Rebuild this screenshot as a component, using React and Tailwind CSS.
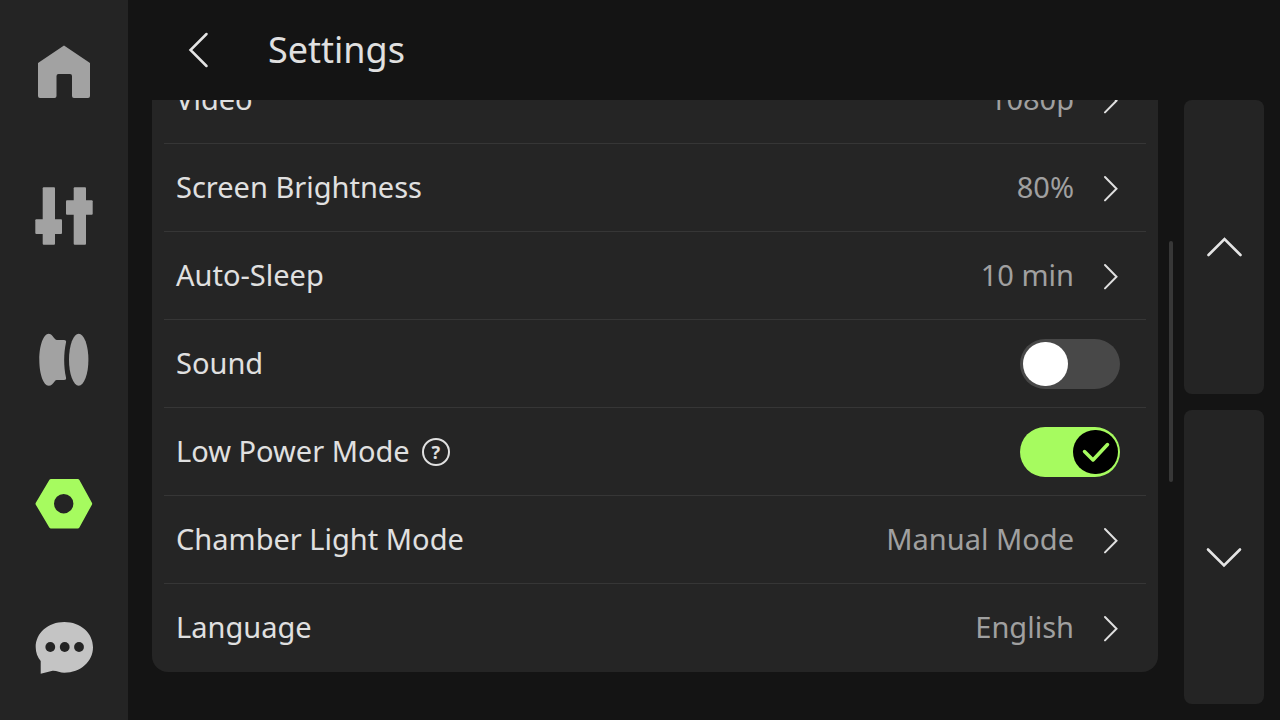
import { useState } from "react"
import clsx from "clsx"

const navItems = [
  { id: "home", label: "Home", Icon: HomeIcon },
  { id: "controls", label: "Controls", Icon: ControlsIcon },
  { id: "filament", label: "Filament", Icon: SpoolIcon },
  { id: "settings", label: "Settings", Icon: NutIcon },
  { id: "messages", label: "Messages", Icon: ChatIcon },
]

const settings = [
  { id: "video", label: "Video", value: "1080p" },
  { id: "brightness", label: "Screen Brightness", value: "80%" },
  { id: "sleep", label: "Auto-Sleep", value: "10 min" },
  { id: "sound", label: "Sound", toggle: true, on: false },
  { id: "power", label: "Low Power Mode", toggle: true, on: true, help: true },
  { id: "light", label: "Chamber Light Mode", value: "Manual Mode" },
  { id: "language", label: "Language", value: "English" },
]

function HomeIcon() {
  return (
    <svg viewBox="0 0 60 60" className="size-[60px]" fill="currentColor">
      <path d="M30 3.500 56 21v33a2 2 0 0 1-2 2H40a2 2 0 0 1-2-2V34a2 2 0 0 0-2-2H24.500a2 2 0 0 0-2 2v20a2 2 0 0 1-2 2H6a2 2 0 0 1-2-2V21Z" />
    </svg>
  )
}

function ControlsIcon() {
  return (
    <svg viewBox="0 0 60 60" className="size-[60px]" fill="currentColor">
      <rect x="8.700" y="1.300" width="12.300" height="57.400" rx="1" />
      <rect x="1.300" y="33.300" width="26.700" height="14.700" rx="1" />
      <rect x="39.700" y="1.300" width="12.300" height="57.400" rx="1" />
      <rect x="32" y="14.300" width="26.700" height="14.500" rx="1" />
    </svg>
  )
}

function SpoolIcon() {
  return (
    <svg viewBox="0 0 60 60" className="size-[60px]" fill="currentColor">
      <path d="M14.700 3.700C17.500 3.700 18.800 6.500 21 9c.8.900 1.400 1 2.500 1H30c1.800 0 2.400 1 2 2.500-2.400 11-2.400 23.500 0 35 .4 1.700-.3 2.500-2 2.500h-6.500c-1.300 0-1.900.2-2.700 1.200-2 2.500-3.400 4.500-6.100 4.500-5.200 0-9.400-11.600-9.400-26S9.500 3.700 14.700 3.700Z" />
      <ellipse cx="44.700" cy="29.700" rx="9.700" ry="26" />
    </svg>
  )
}

function NutIcon() {
  return (
    <svg viewBox="0 0 60 60" className="size-[60px]" fill="currentColor">
      <path
        fillRule="evenodd"
        d="M17 5h26.700a2 2 0 0 1 1.700 1l12.500 22.700a2 2 0 0 1 0 2L45.400 53.500a2 2 0 0 1-1.700 1H17a2 2 0 0 1-1.700-1L1.800 30.700a2 2 0 0 1 0-2L15.300 6a2 2 0 0 1 1.700-1Zm12.700 15a9.700 9.700 0 1 0 0 19.400 9.700 9.700 0 0 0 0-19.400Z"
      />
    </svg>
  )
}

function ChatIcon() {
  return (
    <svg viewBox="0 0 60 60" className="size-[60px]">
      <path
        fill="currentColor"
        d="M30.300 4C46.500 4 59 15 59 29.300s-12.500 25.400-28.700 25.400c-4.200 0-7.800-2.200-11.800-1.900L6.700 55.700V43C3.500 39.500 1.700 34.500 1.700 29.300 1.700 15 14.200 4 30.300 4Z"
      />
      <g fill="#242424">
        <circle cx="16.300" cy="29" r="4.900" />
        <circle cx="30.700" cy="29" r="4.900" />
        <circle cx="45" cy="29" r="4.900" />
      </g>
    </svg>
  )
}

function Sidebar({ active }) {
  return (
    <nav className="flex w-32 shrink-0 flex-col bg-[#242424]">
      {navItems.map(({ id, label, Icon }) => (
        <button
          key={id}
          aria-label={label}
          className={clsx(
            "flex flex-1 items-center justify-center",
            id === active ? "text-[#a6fb5f]" : id === "messages" ? "text-[#c4c4c4]" : "text-[#a2a2a2]"
          )}
        >
          <Icon />
        </button>
      ))}
    </nav>
  )
}

function Toggle({ id, defaultOn }) {
  const [on, setOn] = useState(defaultOn)

  return (
    <span className="relative flex">
      <input
        id={id}
        type="checkbox"
        checked={on}
        onChange={(e) => setOn(e.target.checked)}
        className="h-[50px] w-[100px] appearance-none rounded-full bg-[#484848] checked:bg-[#a6fb5f]"
      />
      <span
        className={clsx(
          "pointer-events-none absolute top-[3px] flex h-11 w-[45px] items-center justify-center rounded-full",
          on ? "right-[2px] bg-black" : "left-[3px] bg-white"
        )}
      >
        {on && (
          <svg viewBox="0 0 30 22" className="h-[22px] w-[30px]" fill="none" stroke="#a6fb5f" strokeWidth="3.500" strokeLinecap="round" strokeLinejoin="round">
            <path d="M3.500 10.500 12 19 26.500 3.500" />
          </svg>
        )}
      </span>
    </span>
  )
}

function SettingRow({ item }) {
  return (
    <li className="mx-3 flex h-[88px] items-center justify-between border-b border-[#363636] pr-[26px] pl-3 last:border-transparent">
      <div className="flex items-center gap-3">
        <label htmlFor={item.id} className="pb-0.5">
          {item.label}
        </label>
        {item.help && (
          <button
            aria-label="About low power mode"
            className="flex size-7 items-center justify-center rounded-full border-2 border-[#e0e0e0] text-lg leading-none font-bold"
          >
            ?
          </button>
        )}
      </div>
      {item.toggle ? (
        <Toggle id={item.id} defaultOn={item.on} />
      ) : (
        <button id={item.id} className="flex items-center gap-[26px]">
          <span className="pb-0.5 text-[#a0a0a0]">{item.value}</span>
          <svg viewBox="0 0 20 28" className="h-7 w-5" fill="none" stroke="#e0e0e0" strokeWidth="2" strokeLinecap="round">
            <path d="M5 3 16.500 14.700 5 26.400" />
          </svg>
        </button>
      )}
    </li>
  )
}

function ScrollButton({ label, path }) {
  return (
    <button aria-label={label} className="flex flex-1 items-center justify-center rounded-lg bg-[#242424]">
      <svg viewBox="0 0 40 24" className="h-6 w-10" fill="none" stroke="#e4e4e4" strokeWidth="2.600" strokeLinecap="round">
        <path d={path} />
      </svg>
    </button>
  )
}

function App() {
  return (
    <div className="flex h-screen overflow-hidden bg-[#141414] font-['Noto_Sans',sans-serif] text-[#e0e0e0]">
      <Sidebar active="settings" />

      <div className="flex min-w-0 flex-1 flex-col">
        {/* Title bar */}
        <header className="flex h-[100px] shrink-0 items-center gap-11 pl-11">
          <button aria-label="Back" className="flex w-[52px] justify-center">
            <svg viewBox="0 0 24 40" className="h-10 w-6" fill="none" stroke="#e4e4e4" strokeWidth="2.500" strokeLinecap="round">
              <path d="M20.500 34 4.500 18 20.500 2" transform="translate(0 2)" />
            </svg>
          </button>
          <h1 className="text-4xl">Settings</h1>
        </header>

        <div className="flex min-h-0 flex-1 pr-4 pl-6">
          {/* Settings list, scrolled half a row past its top item */}
          <main className="min-w-0 flex-1 overflow-hidden">
            <ul className="-mt-11 rounded-b-2xl bg-[#252525] text-[29px] leading-10">
              {settings.map((item) => (
                <SettingRow key={item.id} item={item} />
              ))}
            </ul>
          </main>

          {/* Scroll position */}
          <div className="mx-[11px] flex w-1 flex-col">
            <div className="grow-[141]" />
            <div className="grow-[241] rounded-full bg-[#373737]" />
            <div className="grow-[238]" />
          </div>

          <div className="flex w-20 flex-col gap-4 pb-4">
            <ScrollButton label="Scroll up" path="M4.500 20 20.500 4 36.500 20" />
            <ScrollButton label="Scroll down" path="M4 4.500 20 20.500 36 4.500" />
          </div>
        </div>
      </div>
    </div>
  )
}

export default App
